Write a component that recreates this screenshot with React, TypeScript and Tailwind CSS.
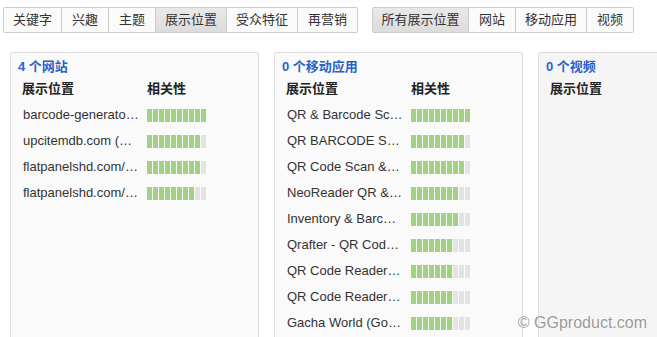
import React from 'react';

const tabsA = [
  { t: '关键字', w: 'w-[58px]' },
  { t: '兴趣', w: 'w-[47px]' },
  { t: '主题', w: 'w-[47px]' },
  { t: '展示位置', w: 'w-[71px]' },
  { t: '受众特征', w: 'w-[71px]' },
  { t: '再营销', w: 'w-[60px]' },
];
const tabsB = [
  { t: '所有展示位置', w: 'w-[96px]' },
  { t: '网站', w: 'w-[47px]' },
  { t: '移动应用', w: 'w-[71px]' },
  { t: '视频', w: 'w-[47px]' },
];

const sites = [
  { name: 'barcode-generator.org', score: 10 },
  { name: 'upcitemdb.com (UPC)', score: 9 },
  { name: 'flatpanelshd.com/news', score: 9 },
  { name: 'flatpanelshd.com/reviews', score: 8 },
];

const apps = [
  { name: 'QR & Barcode Scanner', score: 10 },
  { name: 'QR BARCODE SCANNER', score: 9 },
  { name: 'QR Code Scan & Barcode', score: 9 },
  { name: 'NeoReader QR & Barcode', score: 8 },
  { name: 'Inventory & Barcode', score: 8 },
  { name: 'Qrafter - QR Code Reader', score: 7 },
  { name: 'QR Code Reader and Scanner', score: 7 },
  { name: 'QR Code Reader by Scan', score: 7 },
  { name: 'Gacha World (Gold Edition)', score: 7 },
];

const font = { fontFamily: '"Liberation Sans", Arial, "Noto Sans CJK SC", sans-serif' };

const TabGroup = ({ items, active }: { items: { t: string; w: string }[]; active: string }) => (
  <div className="flex h-[26px] border-y border-r border-[#cccccc] rounded-[2px] overflow-hidden">
    {items.map(({ t, w }) => (
      <div
        key={t}
        className={`flex items-center justify-center ${w} text-[13px] text-[#333] border-l border-[#cccccc] ${t === active ? 'bg-gradient-to-b from-[#e9e9e9] to-[#dcdcdc]' : 'bg-[#fafafa]'}`}
      >
        {t}
      </div>
    ))}
  </div>
);

const Bar = ({ score }: { score: number }) => (
  <div className="flex gap-px">
    {Array.from({ length: 10 }).map((_, i) => (
      <div key={i} className={`w-[5px] h-[13px] ${i < score ? 'bg-[#a2d185]' : 'bg-[#e3e3e3]'}`} />
    ))}
  </div>
);

const Panel = ({
  title,
  rows,
  showRelevance = true,
  bg = 'bg-[#fafafa]',
}: {
  title: string;
  rows: { name: string; score: number }[];
  showRelevance?: boolean;
  bg?: string;
}) => (
  <div className={`w-[249px] shrink-0 h-[300px] border border-[#dddddd] rounded-[2px] ${bg}`}>
    <div className="pl-[7px] pt-[4px] h-[25px] text-[13px] font-bold text-[#2a62c9] leading-[20px]">{title}</div>
    <div className="flex pl-[11px] h-[22px] items-center text-[13px] font-bold text-[#222]">
      <div className="w-[125px]">展示位置</div>
      {showRelevance && <div>相关性</div>}
    </div>
    <div className="pt-[2px]">
      {rows.map((r) => (
        <div key={r.name} className="flex items-center pl-[12px] h-[26px]">
          <div className="w-[116px] mr-[8px] truncate text-[13px] text-[#333]">{r.name}</div>
          <Bar score={r.score} />
        </div>
      ))}
    </div>
  </div>
);

export default function App() {
  return (
    <div className="relative w-[657px] h-[337px] overflow-hidden bg-white" style={font}>
      <div className="flex pt-[7px] pl-[3px] gap-[14px]">
        <TabGroup items={tabsA} active="展示位置" />
        <TabGroup items={tabsB} active="所有展示位置" />
      </div>
      <div className="flex pl-[10px] pt-[19px] gap-[15px]">
        <Panel title="4 个网站" rows={sites} />
        <Panel title="0 个移动应用" rows={apps} />
        <Panel title="0 个视频" rows={[]} showRelevance={false} bg="bg-[#f5f5f5]" />
      </div>
      <div
        className="absolute right-[10px] bottom-[2px] text-[16px] text-[#9a9a9a]"
        style={{ textShadow: '0 0 2px #fff, 0 0 2px #fff' }}
      >
        © GGproduct.com
      </div>
    </div>
  );
}
